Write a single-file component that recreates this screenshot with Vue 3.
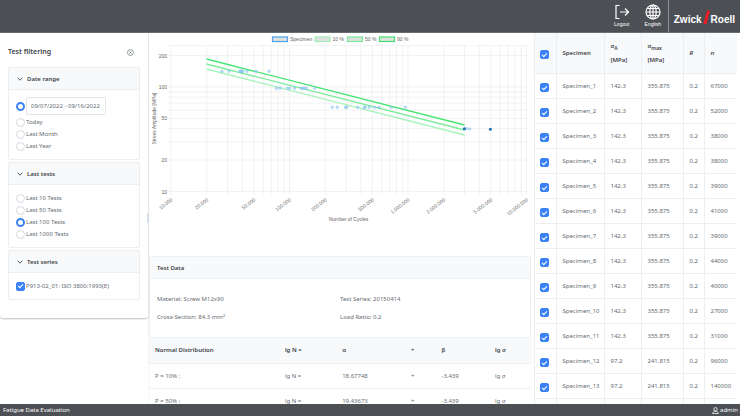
<script setup>
import { ref } from 'vue'

const dateRange = ref('custom')
const period = ref('09/07/2022 - 09/16/2022')
const lastTests = ref('Last 100 Tests')
const seriesOn = ref(true)
const allOn = ref(true)
const testOptions = ['Last 10 Tests', 'Last 50 Tests', 'Last 100 Tests', 'Last 1000 Tests']

const cycles = [67000, 52000, 38000, 38000, 39000, 41000, 39000, 44000, 40000, 27000, 31000, 96000, 140000]
const specimens = ref(cycles.map((n, i) => ({
  name: `Specimen_${i + 1}`,
  a: i < 11 ? '142.3' : '97.2',
  max: i < 11 ? '355.875' : '241.815',
  r: '0.2',
  n,
  on: true
})))

const distribution = [
  { p: 'P = 10% :', alpha: '18.67748' },
  { p: 'P = 50% :', alpha: '19.43673' }
]

// Chart geometry: both axes are logarithmic
const px = n => 22 + 118.5 * (Math.log10(n) - 4)
const py = s => 157.5 - 104.5 * (Math.log10(s) - 1)
const xGrid = []
for (const d of [1e4, 1e5, 1e6]) for (let k = 1; k < 10; k++) xGrid.push(px(d * k))
xGrid.push(px(1e7))
const yGrid = [10, 20, 30, 40, 50, 60, 70, 80, 90, 100, 200, 250].map(py)
const xTicks = [
  [1e4, '10.000'], [2e4, '20.000'], [5e4, '50.000'], [1e5, '100.000'], [2e5, '200.000'],
  [5e5, '500.000'], [1e6, '1.000.000'], [2e6, '2.000.000'], [5e6, '5.000.000'], [1e7, '10.000.000']
].map(([v, label]) => ({ x: px(v), label }))
const yTicks = [10, 20, 50, 100, 200].map(v => ({ y: py(v), label: v }))
const lines = [
  { y: 35, color: '#a9f3bd' },
  { y: 30, color: '#7deb9b' },
  { y: 25, color: '#4ae576' }
]
const points = [
  ...[73, 80, 91, 92, 93, 94, 98, 107, 120].map(x => [x, 37.3]),
  ...[127.3, 131.3, 138.3, 140.7, 145.7, 152.3, 153.5, 155.5, 157.3, 165.7].map(x => [x, 54.3]),
  ...[183.3, 188.3, 196.5, 198, 208.7, 215.5, 216.2, 220.3, 225.7, 230, 242.3, 256.3].map(x => [x, 73.3]),
  [317.3, 94.6], [320.7, 94.9]
]
const runouts = [[315.4, 94.7], [341.4, 95.3]]
const legend = [
  { x: 123, tx: 141, label: 'Specimen', color: '#4a9fe8' },
  { x: 165.5, tx: 183.5, label: '10 %', color: '#a3efb7' },
  { x: 198, tx: 216, label: '50 %', color: '#7be899' },
  { x: 230, tx: 248, label: '90 %', color: '#42df70' }
]
</script>

<template>
  <div class="app">
    <header class="topbar">
      <button class="tool" type="button">
        <svg viewBox="0 0 16 16" width="16" height="16" aria-hidden="true">
          <path d="M5.5 1.5H2v13h3.500M6 8h8.500M11 4.500 14.500 8 11 11.500" />
        </svg>
        <span>Logout</span>
      </button>
      <button class="tool" type="button">
        <svg viewBox="0 0 16 16" width="16" height="16" aria-hidden="true">
          <circle cx="8" cy="8" r="7" /><ellipse cx="8" cy="8" rx="3.200" ry="7" />
          <path d="M8 1v14M1 8h14M2 4.500h12M2 11.500h12" />
        </svg>
        <span>English</span>
      </button>
      <div class="brand">
        <span>Zwick</span>
        <svg viewBox="0 0 7 14" width="7" height="14" aria-hidden="true"><path d="M4 .5H7L3.400 14H.4Z" fill="#ee1c25" /></svg>
        <span>Roell</span>
      </div>
    </header>

    <main class="body">
      <aside class="side">
        <div class="side-head">
          <h1>Test filtering</h1>
          <button type="button" class="close" aria-label="Close">
            <svg viewBox="0 0 8 8" width="7" height="7"><circle cx="4" cy="4" r="3.400" /><path d="M2.700 2.700 5.300 5.300M5.300 2.700 2.700 5.300" /></svg>
          </button>
        </div>

        <section class="panel">
          <h2><svg viewBox="0 0 6 4" width="6" height="4"><path d="M.5.7 3 3.200 5.500.7" /></svg>Date range</h2>
          <div class="options">
            <div class="option tall">
              <input type="radio" id="custom" value="custom" v-model="dateRange" aria-label="Custom range">
              <input type="text" class="period" v-model="period" aria-label="Period">
            </div>
            <label v-for="o in ['Today', 'Last Month', 'Last Year']" :key="o" class="option">
              <input type="radio" :value="o" v-model="dateRange">{{ o }}
            </label>
          </div>
        </section>

        <section class="panel">
          <h2><svg viewBox="0 0 6 4" width="6" height="4"><path d="M.5.7 3 3.200 5.500.7" /></svg>Last tests</h2>
          <div class="options">
            <label v-for="o in testOptions" :key="o" class="option">
              <input type="radio" :value="o" v-model="lastTests">{{ o }}
            </label>
          </div>
        </section>

        <section class="panel">
          <h2><svg viewBox="0 0 6 4" width="6" height="4"><path d="M.5.7 3 3.200 5.500.7" /></svg>Test series</h2>
          <div class="options">
            <label class="option"><input type="checkbox" v-model="seriesOn">P913-02_01: ISO 3800:1993(E)</label>
          </div>
        </section>
        <span class="handle"></span>
      </aside>

      <div class="center">
        <svg class="chart" viewBox="0 0 382 222" role="img" aria-label="Stress amplitude by number of cycles">
          <g v-for="l in legend" :key="l.label">
            <rect :x="l.x + 0.5" y="3" width="15" height="4.500" fill="#dfe1e1" :stroke="l.color" stroke-width="1.200" />
            <text :x="l.tx" y="7">{{ l.label }}</text>
          </g>
          <g stroke="#e9e9e9" stroke-width="0.600">
            <line v-for="x in xGrid" :key="x" :x1="x" :x2="x" y1="11.500" y2="160.500" />
            <line v-for="y in yGrid" :key="y" :y1="y" :y2="y" x1="19" x2="377.500" />
          </g>
          <g text-anchor="end">
            <text v-for="t in yTicks" :key="t.label" x="18" :y="t.y + 2">{{ t.label }}</text>
            <text v-for="t in xTicks" :key="t.label" :transform="`translate(${t.x + 2} 166.500) rotate(-37)`">{{ t.label }}</text>
          </g>
          <text text-anchor="middle" transform="translate(6.500 84.500) rotate(-90)">Stress Amplitude [MPa]</text>
          <text text-anchor="middle" x="199.500" y="187">Number of Cycles</text>
          <line v-for="l in lines" :key="l.y" x1="57.500" x2="315.500" :y1="l.y" :y2="l.y + 66" :stroke="l.color" stroke-width="1.400" />
          <circle v-for="(p, i) in points" :key="i" :cx="p[0]" :cy="p[1]" r="1.200" fill="#c3e0f8" fill-opacity=".7" stroke="#5aa7ea" stroke-opacity=".75" stroke-width=".6" />
          <circle v-for="(p, i) in runouts" :key="'r' + i" :cx="p[0]" :cy="p[1]" r="1.500" fill="#1f6fb8" />
        </svg>

        <section class="data">
          <h2>Test Data</h2>
          <div class="facts">
            <span>Material: Screw M12x90</span><span>Test Series: 20150414</span>
            <span>Cross-Section: 84.3 mm²</span><span>Load Ratio: 0.2</span>
          </div>
        </section>
        <table class="dist">
          <colgroup><col class="d1"><col class="d2"><col class="d3"><col class="d4"><col class="d5"><col></colgroup>
          <thead>
            <tr><th>Normal Distribution</th><th>lg N =</th><th>α</th><th>+</th><th>β</th><th>lg σ</th></tr>
          </thead>
          <tbody>
            <tr v-for="d in distribution" :key="d.p">
              <td>{{ d.p }}</td><td>lg N =</td><td>{{ d.alpha }}</td><td>+</td><td>-3.439</td><td>lg σ</td>
            </tr>
          </tbody>
        </table>
      </div>

      <div class="right">
        <table class="specs">
          <colgroup><col class="s1"><col class="s2"><col class="s3"><col class="s4"><col class="s5"><col></colgroup>
          <thead>
            <tr>
              <th><input type="checkbox" v-model="allOn" aria-label="Select all"></th>
              <th>Specimen</th>
              <th><span class="sym">σ<small>A</small></span><span class="unit">[MPa]</span></th>
              <th><span class="sym">σ<small>max</small></span><span class="unit">[MPa]</span></th>
              <th><i>R</i></th>
              <th>n</th>
            </tr>
          </thead>
          <tbody>
            <tr v-for="s in specimens" :key="s.name">
              <td><input type="checkbox" v-model="s.on" :aria-label="s.name"></td>
              <td>{{ s.name }}</td><td>{{ s.a }}</td><td>{{ s.max }}</td><td>{{ s.r }}</td><td>{{ s.n }}</td>
            </tr>
            <tr aria-hidden="true"><td v-for="c in 6" :key="c"></td></tr>
          </tbody>
        </table>
      </div>
    </main>

    <footer class="foot">
      <span>Fatigue Data Evaluation</span>
      <span class="user">
        <svg viewBox="0 0 8 8" width="7" height="7" aria-hidden="true"><circle cx="4" cy="2.500" r="1.900" /><path d="M.8 7.500C1 5.600 2.200 4.800 4 4.800S7 5.600 7.200 7.500Z" /></svg>
        admin
      </span>
    </footer>
  </div>
</template>

<style>
body { background: #fff; overflow: hidden; }
</style>

<style scoped>
.app {
  display: flex; flex-direction: column; height: 100vh;
  font: 6px/12px "Noto Sans", "Open Sans", sans-serif; color: #666c72;
}
*, *::before, *::after { box-sizing: border-box; }
h1, h2 { margin: 0; color: #3d4248; font-weight: 600; }
button { font: inherit; border: 0; padding: 0; background: none; color: inherit; }

.topbar { display: flex; justify-content: flex-end; flex: 0 0 33px; background: #4c4f54; color: #fff; border-bottom: 1px solid #6a6d72; }
.tool { display: flex; flex-direction: column; align-items: center; justify-content: flex-start; width: 31px; padding: 4px 0 0 1px; font: 5px/9px "Liberation Sans", sans-serif; }
.tool svg { fill: none; stroke: #fff; stroke-width: 1.2; }
.brand { display: flex; align-items: center; gap: 1px; padding: 7px 5px 0 5px; border-left: 1px solid #8d9094; font: bold 10px/12px "Liberation Sans", sans-serif; }
.brand svg { margin-bottom: 5px; }

.body { flex: 1; min-height: 0; display: grid; grid-template-columns: 148px minmax(0, 1fr) 206px; }
.side { position: relative; align-self: start; padding: 9px 8px 16px; border-radius: 0 0 3px 3px; box-shadow: 0 1px 2px rgba(0, 0, 0, .25); }
.side-head { display: flex; justify-content: space-between; align-items: center; height: 20px; padding-right: 6px; margin-bottom: 5px; }
.side-head h1 { font-size: 7px; }
.close { display: flex; }
.close svg { fill: none; stroke: #6f757b; stroke-width: .8; }
.panel { border: 1px solid #eceef0; border-radius: 2px; margin-bottom: 2px; }
.panel h2 { display: flex; align-items: center; gap: 4px; height: 22px; padding: 0 8px; background: #f8f9fa; border-bottom: 1px solid #eceef0; font-size: 6px; }
.panel h2 svg { fill: none; stroke: #43484e; stroke-width: .9; }
.options { padding: 7px; }
.option { display: flex; align-items: center; gap: 1px; min-height: 12px; white-space: nowrap; }
.option.tall { height: 18px; margin-bottom: 1px; }
.period { width: 80px; height: 18px; padding: 0 4px; border: 1px solid #e3e6e9; border-radius: 2px; font: inherit; color: inherit; }
input[type="radio"], input[type="checkbox"] { appearance: none; flex: none; width: 9px; height: 9px; margin: 0; background: #fff; }
input[type="radio"] { border: 1px solid #d3d8de; border-radius: 50%; }
input[type="radio"]:checked { border: 2px solid #3b82f6; }
input[type="checkbox"] { border: 1px solid #d3d8de; border-radius: 2px; display: inline-grid; place-items: center; }
input[type="checkbox"]:checked { background: #3b82f6; border-color: #3b82f6; }
input[type="checkbox"]:checked::before { content: ""; width: 5px; height: 3px; margin-bottom: 1px; border-left: 1px solid #fff; border-bottom: 1px solid #fff; transform: rotate(-45deg); }
.handle { position: absolute; right: -1px; top: 180px; width: 2px; height: 10px; background: #d9dfe6; }

.center { min-width: 0; padding: 1px 3px 0 0; border-left: 1px solid #f5f6f7; overflow: hidden; }
.chart { display: block; width: 100%; height: auto; }
.chart text { font: 5px "Liberation Sans", sans-serif; fill: #666; }
.data { border: 1px solid #eceef0; border-radius: 2px; }
.data h2 { height: 22px; padding: 0 7px; line-height: 22px; font-size: 6px; background: #f8f9fa; border-bottom: 1px solid #eceef0; }
.facts { display: grid; grid-template-columns: 1fr 1fr; row-gap: 6px; padding: 14px 7px; }
table { width: 100%; table-layout: fixed; border-collapse: collapse; }
th, td { padding: 0 6px; text-align: left; white-space: nowrap; font-weight: 400; border-bottom: 1px solid #eceef0; height: 25px; }
th { background: #f8f9fa; color: #3d4248; font-weight: 600; }
.d1 { width: 34%; } .d2 { width: 15%; } .d3 { width: 18%; } .d4 { width: 8%; } .d5 { width: 14%; }

.right { min-width: 0; padding: 0 3px 0 0; overflow: hidden; border-left: 1px solid #eceef0; }
.specs th { height: 40px; }
.specs th + th, .specs td + td { border-left: 1px solid #eceef0; }
.specs th:first-child, .specs td:first-child { padding: 4px 2px 0 0; text-align: center; line-height: 0; }
.s1 { width: 21px; } .s2 { width: 48px; } .s3 { width: 37px; } .s4 { width: 42px; } .s5 { width: 21px; }
.sym, .unit { display: block; line-height: 14px; }
small { font-size: 5px; vertical-align: sub; line-height: 0; }

.foot { flex: 0 0 12px; display: flex; justify-content: space-between; padding: 0 2px 0 3px; background: #4c4f54; color: #fff; z-index: 1; }
.user { display: flex; align-items: center; gap: 1px; }
.user svg { fill: none; stroke: #fff; stroke-width: .9; }
</style>
